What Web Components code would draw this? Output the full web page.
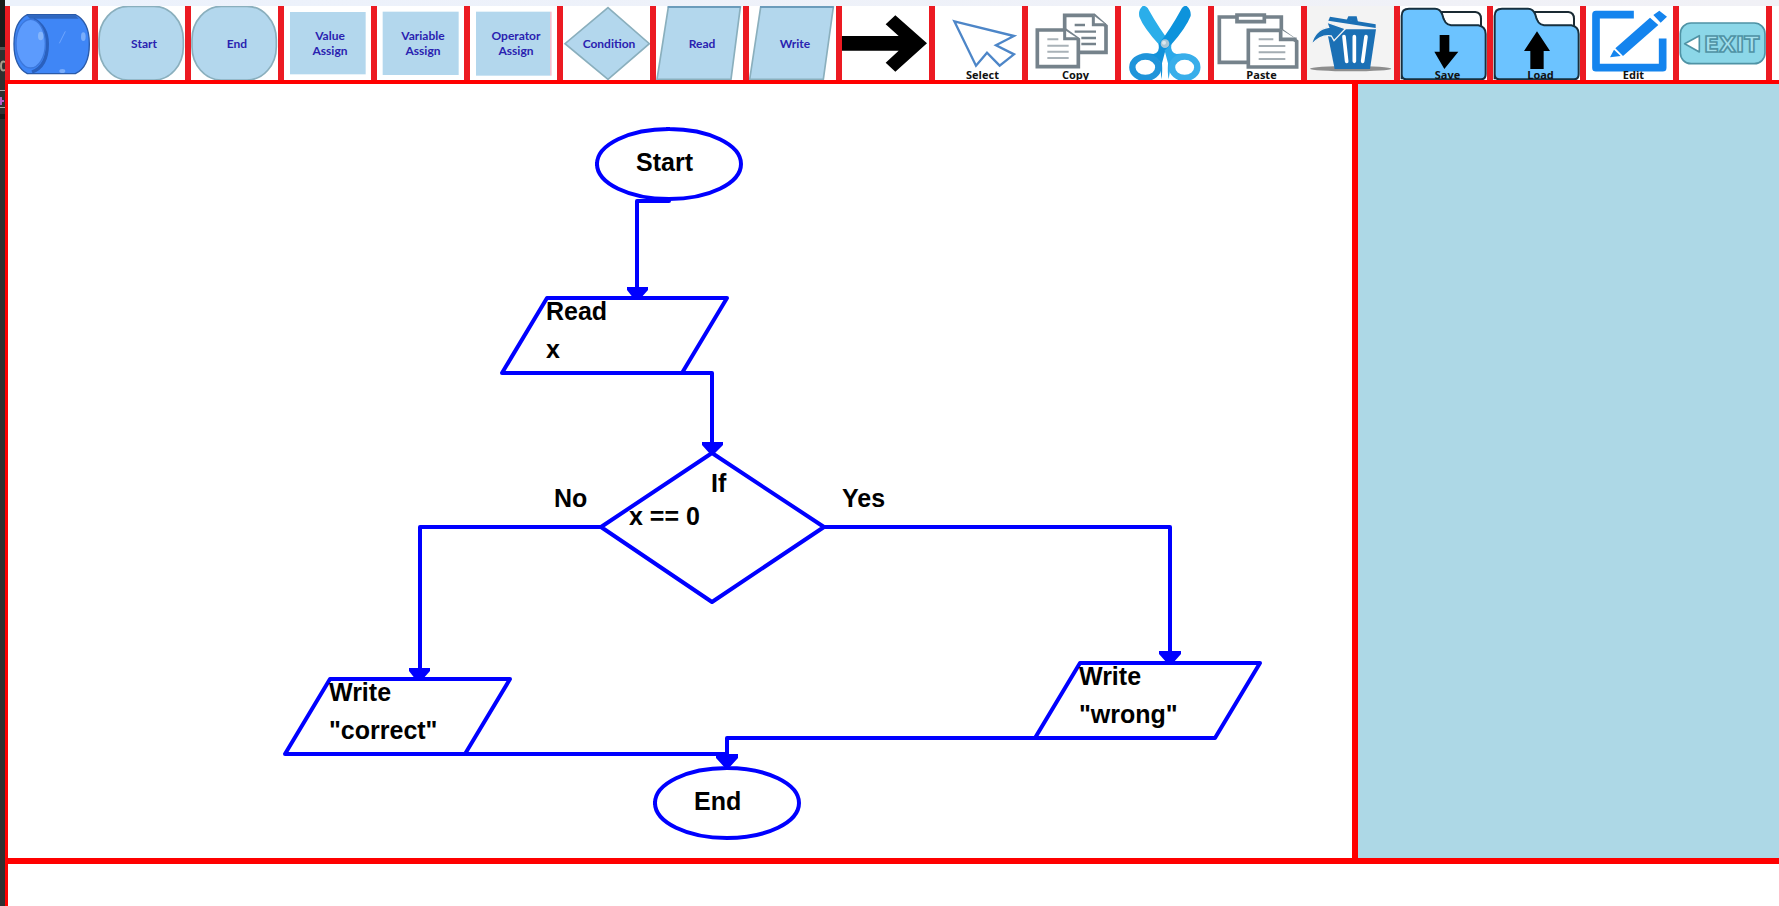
<!DOCTYPE html>
<html lang="en">
<head>
<meta charset="utf-8">
<title>Flowchart editor</title>
<style>
  html, body { margin: 0; background: #fff; }
  body { font-family: "Liberation Sans", Arial, sans-serif; color: #000; }
</style>
</head>
<body>
<flow-app></flow-app>

<template id="t-app">
  <style>
    :host { display: flex; min-height: 100vh; overflow: hidden; }
    edge-strip { flex: 0 0 5px; }
    .main { flex: 1; min-width: 0; display: flex; flex-direction: column; }
    .work { flex: 1; display: flex; border-left: 3px solid #f00; }
    flow-canvas { flex: 1; min-width: 0; }
    aside { flex: 0 0 421px; background: #add8e6; border-left: 6px solid #f00; }
    footer { height: 42px; border-top: 6px solid #f00; border-left: 3px solid #f00; }
  </style>
  <edge-strip></edge-strip>
  <div class="main">
    <tool-bar>
      <tool-button icon="cylinder" first></tool-button>
      <tool-button icon="start" kind="shape">Start</tool-button>
      <tool-button icon="end" kind="shape">End</tool-button>
      <tool-button icon="value" kind="shape">Value<br>Assign</tool-button>
      <tool-button icon="variable" kind="shape">Variable<br>Assign</tool-button>
      <tool-button icon="operator" kind="shape">Operator<br>Assign</tool-button>
      <tool-button icon="condition" kind="shape">Condition</tool-button>
      <tool-button icon="read" kind="shape">Read</tool-button>
      <tool-button icon="write" kind="shape">Write</tool-button>
      <tool-button icon="arrow"></tool-button>
      <tool-button icon="select" kind="caption">Select</tool-button>
      <tool-button icon="copy" kind="caption">Copy</tool-button>
      <tool-button icon="cut"></tool-button>
      <tool-button icon="paste" kind="caption">Paste</tool-button>
      <tool-button icon="trash"></tool-button>
      <tool-button icon="save" kind="caption">Save</tool-button>
      <tool-button icon="load" kind="caption">Load</tool-button>
      <tool-button icon="edit" kind="caption">Edit</tool-button>
      <tool-button icon="exit"></tool-button>
    </tool-bar>
    <div class="work">
      <flow-canvas></flow-canvas>
      <aside aria-label="Output"></aside>
    </div>
    <footer></footer>
  </div>
</template>

<template id="t-edge">
  <style>
    :host { display: block; overflow: hidden; background: #303030; }
    svg { display: block; }
  </style>
  <svg width="5" height="130" viewBox="0 0 5 130" aria-hidden="true">
    <rect width="5" height="47" fill="#1b1b1b"/>
    <rect y="47" width="5" height="3" fill="#555"/>
    <path d="M5 62Q1 60 1 66T5 70" fill="none" stroke="#a89c8c" stroke-width="2"/>
    <rect y="90" width="5" height="1" fill="#aaa"/><rect y="107" width="5" height="1" fill="#aaa"/>
    <path d="M0 101H4M1 97V105" stroke="#b45fc4" stroke-width="2"/>
    <rect y="114" width="5" height="5" fill="#1b1b1b"/>
  </svg>
</template>

<template id="t-bar">
  <style>
    :host { display: flex; height: 74px; padding-top: 6px; overflow: hidden;
      border-bottom: 4px solid #f00;
      background: linear-gradient(90deg, #ecf2fc, #f1f1f6) top / 100% 6px no-repeat #fff; }
  </style>
  <slot></slot>
</template>

<template id="t-button">
  <style>
    :host { display: block; flex: 0 0 93px; height: 74px; }
    button { display: grid; width: 100%; height: 100%; margin: 0; padding: 0; border: 0;
      border-right: 6px solid #ec1a22; background: #fff; overflow: hidden; cursor: pointer;
      font: inherit; color: #000; }
    :host([first]) button { border-left: 5px solid #ec1a22; }
    :host([icon="trash"]) button { background: #f3f3f3; }
    svg, .label { grid-area: 1 / 1; }
    svg { display: block; width: 100%; height: 74px; }
    .label { position: relative; }
    :host([kind="shape"]) .label { align-self: center; justify-self: center; padding-left: 5px;
      font: bold 12px/15px Lato, sans-serif; color: #2a22b0; }
    :host([kind="caption"]) .label { align-self: end; justify-self: center; height: 13px;
      padding-left: 8px; font: bold 11px/16px "Open Sans", sans-serif; color: #111; }
  </style>
  <button type="button"><svg aria-hidden="true" preserveAspectRatio="none"></svg><span class="label"><slot></slot></span></button>
</template>

<template id="t-node">
  <style>
    :host { display: block; position: absolute; font: bold 25px/28px "Liberation Sans", Arial, sans-serif; }
    svg { position: absolute; inset: 0; overflow: visible; fill: none; stroke: #00f; stroke-width: 4; stroke-linejoin: round; }
    .lines { position: relative; display: flex; flex-direction: column; gap: 10px; white-space: nowrap; }
    :host([shape="oval"]) { width: 148px; height: 74px; }
    :host([shape="oval"]) .lines { padding: 21px 0 0 41px; }
    :host([shape="io"]) { width: 229px; height: 79px; }
    :host([shape="io"]) .lines { padding: 1px 0 0 46px; }
    :host([shape="decision"]) { width: 227px; height: 153px; }
    :host([shape="decision"]) .lines { padding: 18px 0 0 30px; gap: 5px; }
    ::slotted(.head) { padding-left: 82px; }
  </style>
  <svg width="100%" height="100%" aria-hidden="true"><path/></svg>
  <div class="lines"><slot></slot></div>
</template>

<template id="t-canvas">
  <style>
    :host { display: block; position: relative; min-height: 774px; background: #fff; overflow: hidden; }
    .links { position: absolute; left: 0; top: 0; }
    .links .wire { fill: none; stroke: #00f; stroke-width: 4; stroke-linejoin: round; stroke-linecap: round; }
    .links .tip { fill: #00f; }
    .tag { position: absolute; font: bold 25px/28px "Liberation Sans", Arial, sans-serif; }
  </style>
  <svg class="links" width="1344" height="774" viewBox="8 84 1344 774" aria-hidden="true">
    <path class="wire" d="M669 201H637V290M682 373H712V445M601 527H420V672M824 527H1170V655M466 754H727V760M1035 738H727V760"/>
    <path class="tip" d="M627 287H648V290L640 299H634L627 290ZM702 442H723V445L713 455H711L702 445ZM409 668H430V671L422 680H416L409 671ZM1159 651H1181V654L1173 663H1167L1159 654ZM716 754H738V758L728 769H726L716 758Z"/>
  </svg>
  <flow-node shape="oval" style="left:587px;top:43px"><span>Start</span></flow-node>
  <flow-node shape="io" style="left:492px;top:212px"><span>Read</span><span>x</span></flow-node>
  <flow-node shape="decision" style="left:591px;top:367px"><span class="head">If</span><span>x == 0</span></flow-node>
  <flow-node shape="io" style="left:275px;top:593px"><span>Write</span><span>"correct"</span></flow-node>
  <flow-node shape="io" style="left:1025px;top:577px"><span>Write</span><span>"wrong"</span></flow-node>
  <flow-node shape="oval" style="left:645px;top:682px"><span>End</span></flow-node>
  <span class="tag" style="left:546px;top:400px">No</span>
  <span class="tag" style="left:834px;top:400px">Yes</span>
</template>

<script>
const FILL = '#b3d7ed', EDGE = '#8aafbd';
const pill = x => `<rect x="${x + 3}" y="19" width="253" height="221" rx="88" ry="100" fill="${FILL}" stroke="${EDGE}" stroke-width="5"/>`;
const poly = pts => `<polygon points="${pts}" fill="${FILL}" stroke="${EDGE}" stroke-width="5"/>`;
const folder = arrow => `
  <path d="M280 36H385Q402 38 402 56V80H300Z" fill="#fff" stroke="#1a2a33" stroke-width="6"/>
  <path d="M164 238V48Q164 26 186 26H264Q280 26 286 44Q292 74 312 76H394Q416 80 416 102V222Q416 238 402 238H178Q164 238 164 222Z" fill="#6cc3ff" stroke="#17303f" stroke-width="6"/>
  <path d="${arrow}" fill="#000"/>`;

/* Each icon: [viewBox, markup]; one drawn unit is a third of a pixel. */
const ICONS = {
  cylinder: ['30 18 246 222', `
    <path d="M82 44H226Q268 64 268 132Q268 202 226 221H82Q42 200 42 132Q42 64 82 44Z" fill="#3f86f6" stroke="#2a5aa8" stroke-width="4"/>
    <path d="M80 46H226L236 56H90Z" fill="#2a5aa8" opacity=".7"/>
    <path d="M100 58Q142 80 142 132Q142 200 96 216" fill="none" stroke="#2a60bd" stroke-width="10"/>
    <ellipse cx="92" cy="131" rx="44" ry="73" fill="#5c9bfd" stroke="#3c78dc" stroke-width="4"/>
    <path d="M178 130L196 94" stroke="#6ea6ff" stroke-width="3"/>
    <ellipse cx="122" cy="108" rx="8" ry="13" fill="#85b5fb"/><ellipse cx="250" cy="110" rx="7" ry="13" fill="#79adfb"/><ellipse cx="187" cy="213" rx="9" ry="6" fill="#79adfb"/>`],
  start: ['294 18 261 222', pill(294)],
  end: ['573 18 261 222', pill(573)],
  value: ['852 18 261 222', `<rect x="870" y="36" width="227" height="187" fill="${FILL}"/>`],
  variable: ['21 18 261 222', `<rect x="38" y="35" width="228" height="190" fill="${FILL}"/>`],
  operator: ['300 18 261 222', `<rect x="318" y="35" width="222" height="192" fill="${FILL}"/><rect x="540" y="35" width="5" height="192" fill="#f3c3d3"/>`],
  condition: ['579 18 261 222', poly('714,23 838,131 714,238 585,131')],
  read: ['858 18 261 222', poly('895,21 1111,21 1083,238 861,238') + '<path d="M893 21H1112" stroke="#6c9cbb" stroke-width="6"/>'],
  write: ['27 18 261 222', poly('62,21 280,21 250,238 29,238') + '<path d="M60 21H281" stroke="#6c9cbb" stroke-width="6"/>'],
  arrow: ['306 18 261 222', '<path d="M306 108H476L437 73L466 46L561 130L466 215L437 188L476 152H306Z"/>'],
  select: ['585 18 261 222', '<path d="M643 64L822 108L768 136L822 163L779 197L741 158L708 197Z" fill="#fff" stroke="#4d86c8" stroke-width="7"/>'],
  copy: ['864 18 261 222', `
    <g fill="#fff" stroke="#75828b" stroke-width="11"><path d="M974 46H1062L1098 78V157H974Z"/><path d="M1060 46V74H1098" stroke-width="9"/>
    <path d="M892 90H976L1015 118V200H892Z"/><path d="M974 90V116H1015" stroke-width="9"/></g>
    <path d="M1004 75H1035M1004 95H1068M1024 114H1068M1024 132H1068" stroke="#75828b" stroke-width="7"/>
    <path d="M922 118H955M922 137H986M922 155H986M922 174H986" stroke="#a9b2b8" stroke-width="6"/>`],
  cut: ['33 18 261 222', `
    <path d="M98 18Q84 30 88 50Q100 82 148 135L176 162L184 132Q150 90 113 24Q106 16 98 18Z" fill="#2aaeea"/>
    <path d="M230 18Q244 30 242 48Q228 84 182 136L152 162L146 132Q180 90 216 24Q222 16 230 18Z" fill="#0d93dc"/>
    <path d="M146 132Q150 160 130 162Q110 158 92 162L150 184L154 238Q158 220 156 190L166 152Z" fill="#1191da"/>
    <path d="M184 132Q180 158 200 162Q220 158 240 164L184 186L176 238Q172 220 174 190L164 152Z" fill="#2ba9ea"/>
    <ellipse cx="106" cy="202" rx="39" ry="32" fill="none" stroke="#1f94da" stroke-width="19"/>
    <ellipse cx="224" cy="202" rx="38" ry="32" fill="none" stroke="#38aeea" stroke-width="19"/>
    <circle cx="165" cy="131" r="13" fill="#a9c6d6"/><circle cx="162" cy="128" r="6" fill="#dbe7ee"/>`],
  paste: ['312 18 261 222', `
    <g fill="#fff" stroke="#75828b" stroke-width="11"><path d="M328 51H514V187H328Z"/><path d="M381 45H463V65H381Z"/>
    <path d="M415 91H514L560 124V201H415Z"/><path d="M512 88V118H560"/></g>
    <path d="M446 118H490M446 138H526M446 157H526M446 177H526" stroke="#a4adb3" stroke-width="6"/>`],
  trash: ['591 18 261 222', `
    <ellipse cx="722" cy="206" rx="122" ry="8" fill="#8d8d8d"/>
    <path d="M664 88H798L780 207H674L654 108Z" fill="#1b70b5"/>
    <path d="M702 110L710 184M733 110V184M768 110L758 184" stroke="#fff" stroke-width="11" stroke-linecap="round"/>
    <path d="M660 50L797 73V84L655 62Z" fill="#1b70b5"/><path d="M710 60L715 49H740L744 66Z" fill="#1b70b5"/>
    <path d="M604 134Q614 88 656 82L650 66L706 86L672 122L664 108Q634 102 604 134Z" fill="#1b70b5" stroke="#f3f3f3" stroke-width="4"/>`],
  save: ['159 18 261 222', folder('M278 105H307V155H334L292 207L262 155H278Z')],
  load: ['159 18 261 222', folder('M291 94L330 153H311V207H271V153H252Z')],
  edit: ['438 18 261 222', `
    <path d="M570 44H468V203H668V127" fill="none" stroke="#1484ee" stroke-width="23" stroke-linecap="square" stroke-linejoin="round"/>
    <path d="M526 145L630 53L655 75L549 168ZM522 149L542 168L510 172ZM640 45L658 32L681 50L662 68Z" fill="#1484ee"/>`],
  exit: ['717 18 261 222', `
    <rect x="721" y="69" width="254" height="122" rx="32" fill="#8cd7e8" stroke="#4f93a5" stroke-width="5"/>
    <path d="M734 131L778 107V156Z" fill="#fff" stroke="#4f93a5" stroke-width="5" stroke-linejoin="round"/>
    <text x="792" y="155" font-family="DejaVu Sans" font-weight="bold" font-size="66" fill="#a5e1ee" stroke="#4f93a5" stroke-width="5">EXIT</text>`]
};
const SHAPES = {
  oval: 'M2 37A72 35 0 0 1 146 37A72 35 0 0 1 2 37ZM0 37H2M73 0V2',
  io: 'M47 2H227L182 77H2Z',
  decision: 'M113 2L225 76L113 151L2 76Z'
};

class TemplateElement extends HTMLElement {
  constructor() {
    super();
    const tpl = document.getElementById(this.constructor.template);
    this.attachShadow({ mode: 'open' }).append(tpl.content.cloneNode(true));
  }
}
customElements.define('edge-strip', class extends TemplateElement { static template = 't-edge'; });
customElements.define('tool-bar', class extends TemplateElement {
  static template = 't-bar';
  connectedCallback() { this.setAttribute('role', 'toolbar'); }
});
customElements.define('tool-button', class extends TemplateElement {
  static template = 't-button';
  connectedCallback() {
    const name = this.getAttribute('icon');
    const [box, markup] = ICONS[name];
    const svg = this.shadowRoot.querySelector('svg');
    svg.setAttribute('viewBox', box);
    svg.innerHTML = markup;
    this.shadowRoot.querySelector('button').setAttribute('aria-label', name);
  }
});
customElements.define('flow-node', class extends TemplateElement {
  static template = 't-node';
  connectedCallback() {
    this.shadowRoot.querySelector('path').setAttribute('d', SHAPES[this.getAttribute('shape')]);
  }
});
customElements.define('flow-canvas', class extends TemplateElement { static template = 't-canvas'; });
customElements.define('flow-app', class extends TemplateElement { static template = 't-app'; });
</script>
</body>
</html>
